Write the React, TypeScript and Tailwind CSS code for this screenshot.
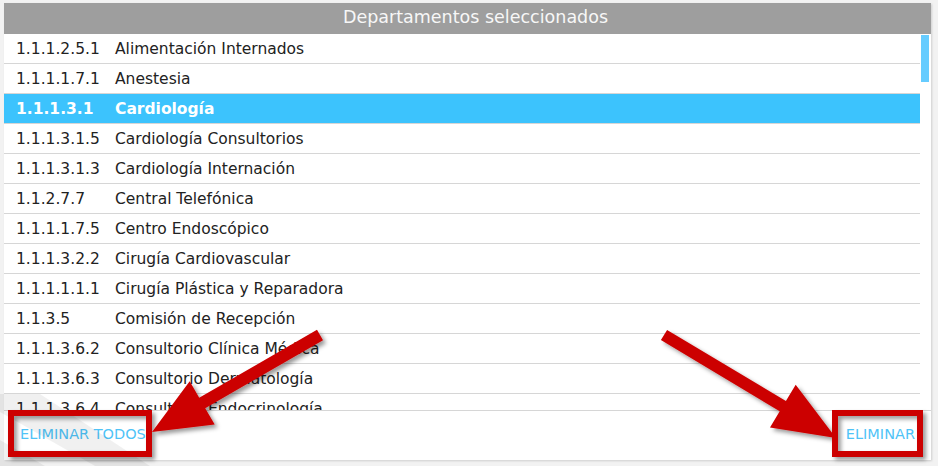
import React from "react";

const rows: [string, string][] = [
  ["1.1.1.2.5.1", "Alimentación Internados"],
  ["1.1.1.1.7.1", "Anestesia"],
  ["1.1.1.3.1", "Cardiología"],
  ["1.1.1.3.1.5", "Cardiología Consultorios"],
  ["1.1.1.3.1.3", "Cardiología Internación"],
  ["1.1.2.7.7", "Central Telefónica"],
  ["1.1.1.1.7.5", "Centro Endoscópico"],
  ["1.1.1.3.2.2", "Cirugía Cardiovascular"],
  ["1.1.1.1.1.1", "Cirugía Plástica y Reparadora"],
  ["1.1.3.5", "Comisión de Recepción"],
  ["1.1.1.3.6.2", "Consultorio Clínica Médica"],
  ["1.1.1.3.6.3", "Consultorio Dermatología"],
  ["1.1.1.3.6.4", "Consultorio Endocrinología"],
];

function arrowPoints(tx: number, ty: number, hx: number, hy: number, shaftW: number, headL: number, headHW: number) {
  const dx = hx - tx;
  const dy = hy - ty;
  const len = Math.hypot(dx, dy);
  const ux = dx / len;
  const uy = dy / len;
  const px = -uy;
  const py = ux;
  const bx = hx - ux * headL;
  const by = hy - uy * headL;
  const s = shaftW / 2;
  const pts = [
    [tx + px * s, ty + py * s],
    [bx + px * s, by + py * s],
    [bx + px * headHW, by + py * headHW],
    [hx, hy],
    [bx - px * headHW, by - py * headHW],
    [bx - px * s, by - py * s],
    [tx - px * s, ty - py * s],
  ];
  return pts.map((p) => `${p[0].toFixed(1)},${p[1].toFixed(1)}`).join(" ");
}

export default function App() {
  return (
    <div
      className="relative w-[938px] h-[466px] bg-[#f2f2f2] overflow-hidden pt-[3px] pl-[4px]"
      style={{ fontFamily: '"DejaVu Sans", Verdana, sans-serif' }}
    >
      <div className="w-[927px] h-[457px] bg-white flex flex-col shadow-[1px_1px_2px_rgba(0,0,0,0.15)]">
        <div className="h-[31px] shrink-0 bg-[#9e9e9e] flex items-center justify-center pl-[16px] pb-[2px] text-[17.5px] text-[#f7f7f7] leading-none">
          Departamentos seleccionados
        </div>
        <div className="h-[376px] shrink-0 flex overflow-hidden">
          <div className="w-[916px] flex flex-col overflow-hidden">
            {rows.map(([code, name], i) => {
              const sel = i === 2;
              return (
                <div
                  key={code}
                  className={
                    sel
                      ? "h-[30px] shrink-0 flex items-center border-b border-[#d6d6d6] bg-[#3cc3fd] text-white font-bold text-[15.5px] leading-none pt-[3px]"
                      : "h-[30px] shrink-0 flex items-center border-b border-[#d6d6d6] text-[#222] text-[15.5px] leading-none pt-[3px]"
                  }
                >
                  <span className="w-[111px] pl-[12px] shrink-0">{code}</span>
                  <span>{name}</span>
                </div>
              );
            })}
          </div>
          <div className="w-[11px] pl-[1px] pt-[1px]">
            <div className="w-[8px] h-[47px] bg-[#66ccff]" />
          </div>
        </div>
        <div className="h-[50px] shrink-0 border-t border-[#d6d6d6] flex items-center justify-between pl-[16px] pr-[16px] text-[14.5px] text-[#4fc3f7] leading-none pb-[2px]">
          <span>ELIMINAR TODOS</span>
          <span>ELIMINAR</span>
        </div>
      </div>

      <svg className="absolute left-0 top-0 pointer-events-none" width="938" height="466" viewBox="0 0 938 466">
        <defs>
          <filter id="sh" x="-20%" y="-20%" width="140%" height="140%">
            <feDropShadow dx="3" dy="3" stdDeviation="2" floodColor="#000" floodOpacity="0.4" />
          </filter>
        </defs>
        <polygon points="0,394 40,394 150,466 95,466 0,412" fill="#000" opacity="0.06" />
        <polygon points="0,440 45,466 0,466" fill="#000" opacity="0.06" />
        <g filter="url(#sh)">
          <rect x="11" y="413" width="138" height="41" fill="none" stroke="#cc0000" strokeWidth="6" />
          <rect x="835" y="413" width="85" height="41" fill="none" stroke="#cc0000" strokeWidth="6" />
          <polygon points={arrowPoints(320, 335, 152, 432, 12, 58, 25)} fill="#cc0000" />
          <polygon points={arrowPoints(664, 335, 836, 438, 12, 62, 25)} fill="#cc0000" />
        </g>
      </svg>
    </div>
  );
}
